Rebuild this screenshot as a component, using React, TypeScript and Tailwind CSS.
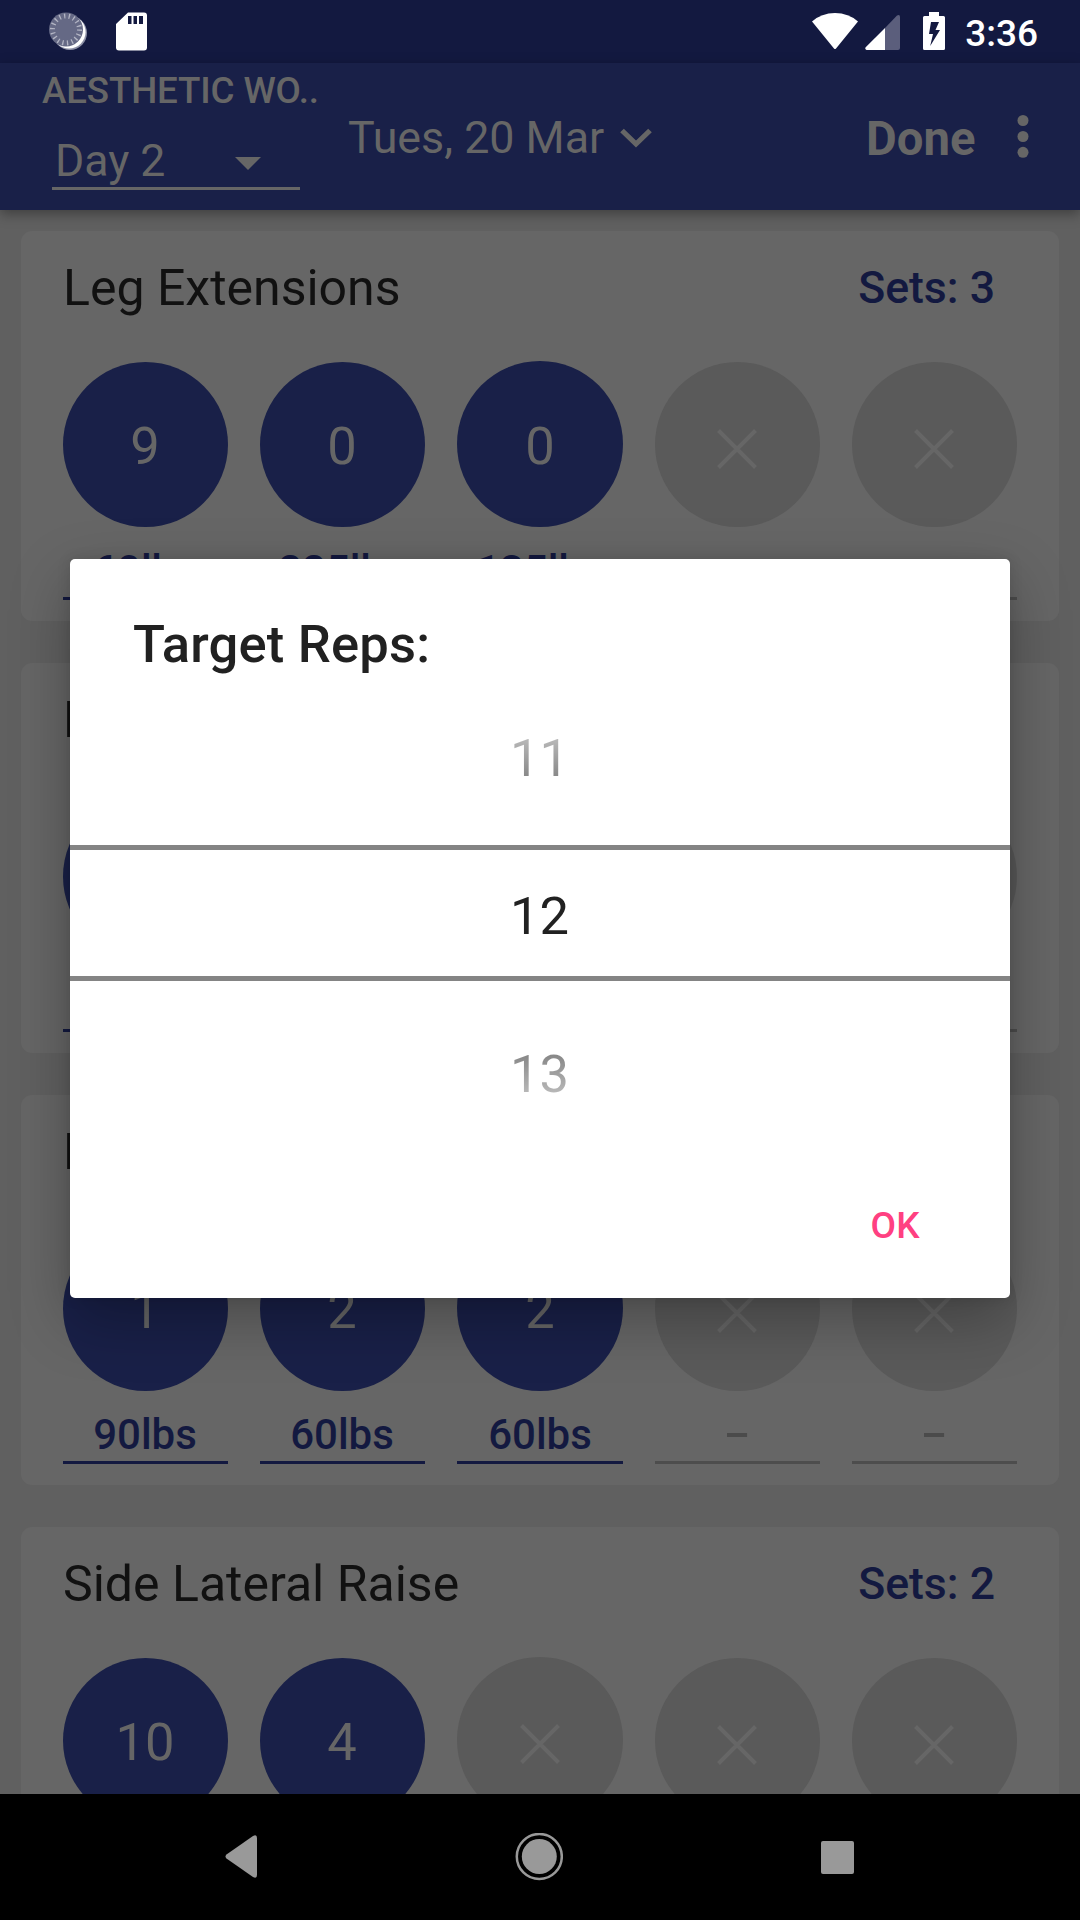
import React from "react";

type SetItem = { reps?: string; weight?: string };
type Exercise = { name: string; sets: string; items: SetItem[] };

const exercises: Exercise[] = [
  {
    name: "Leg Extensions",
    sets: "Sets: 3",
    items: [{ reps: "9", weight: "60lbs" }, { reps: "0", weight: "225lbs" }, { reps: "0", weight: "135lbs" }, {}, {}],
  },
  {
    name: "Leg Press",
    sets: "Sets: 3",
    items: [{ reps: "8", weight: "90lbs" }, { reps: "8", weight: "90lbs" }, { reps: "8", weight: "90lbs" }, {}, {}],
  },
  {
    name: "Leg Curls",
    sets: "Sets: 3",
    items: [{ reps: "1", weight: "90lbs" }, { reps: "2", weight: "60lbs" }, { reps: "2", weight: "60lbs" }, {}, {}],
  },
  {
    name: "Side Lateral Raise",
    sets: "Sets: 2",
    items: [{ reps: "10", weight: "20lbs" }, { reps: "4", weight: "20lbs" }, {}, {}, {}],
  },
];

function SetCell({ item, wide }: { item: SetItem; wide: boolean }) {
  const active = item.reps !== undefined;
  return (
    <div className={wide ? "w-[166px] -mt-px" : "w-[165px] pr-0"}>
      <div
        className={
          "flex items-center justify-center rounded-full " +
          (wide ? "h-[166px] " : "h-[165px] pr-px ") +
          (active ? "bg-[#192048]" : "bg-[#5a5a5a]")
        }
      >
        {active ? (
          <span className="pt-[4px] text-[52.5px] leading-none text-[#666]">{item.reps}</span>
        ) : (
          <svg className="mt-[8px]" width="40" height="40" viewBox="0 0 40 40" fill="none" stroke="#666" strokeWidth="4">
            <path d="M1.500 1.500L38.500 38.500M38.500 1.500L1.500 38.500" />
          </svg>
        )}
      </div>
      <div
        className={
          "h-[70px] pt-[17px] text-center text-[42px] font-medium leading-[53px] " +
          (wide ? "" : "pr-px ") +
          (active ? "text-[#131940]" : "text-[#4b4b4b]")
        }
      >
        {active ? item.weight : <span className="inline-block -translate-y-px scale-x-[1.85]">-</span>}
      </div>
      <div className={"h-[3px] " + (active ? "bg-[#131940]" : "bg-[#4d4d4d]")} />
    </div>
  );
}

function ExerciseCard({ exercise }: { exercise: Exercise }) {
  return (
    <section className="h-[390px] shrink-0 rounded-[11px] bg-[#666] px-[42px]">
      <div className="flex h-[114px] items-center justify-between pr-[22px]">
        <h2 className="text-[50px] text-[#111]">{exercise.name}</h2>
        <span className="text-[44.6px] font-medium text-[#131940]">{exercise.sets}</span>
      </div>
      <div className="mt-[17px] flex gap-8">
        {exercise.items.map((item, i) => (
          <SetCell key={i} item={item} wide={i === 2} />
        ))}
      </div>
    </section>
  );
}

function StatusBar() {
  return (
    <div className="flex h-[63px] shrink-0 items-center bg-[#131940]">
      <svg className="ml-[48px]" width="40" height="63" viewBox="0 0 40 63">
        <circle cx="22" cy="33" r="17" fill="#8d90a6" />
        <circle cx="21" cy="32" r="16.600" fill="#fff" />
        <circle cx="18" cy="29.500" r="17" fill="#656985" />
        <circle cx="18" cy="29.500" r="13.500" fill="none" stroke="#b3b5c4" strokeWidth="5" strokeDasharray="1.300 3.410" />
      </svg>
      <svg className="ml-[28px]" width="31" height="63" viewBox="0 0 31 63">
        <path
          fillRule="evenodd"
          fill="#fff"
          d="M12 12.500H28Q31 12.500 31 15.500V47.500Q31 50.500 28 50.500H3Q0 50.500 0 47.500V24ZM12 16V24H15.500V16ZM17.500 16V24H21V16ZM23 16V24H27V16Z"
        />
      </svg>
      <svg className="ml-auto" width="46" height="63" viewBox="0 0 46 63">
        <path fill="#fff" d="M0 21.500Q9.500 13 23 13Q36.500 13 46 21.500L24 48.500Q23 49.500 22 48.500Z" />
      </svg>
      <svg className="ml-[7px]" width="35" height="63" viewBox="0 0 35 63">
        <path fill="#5b5e7c" d="M32 15.500Q35 14 35 17V48Q35 50 33 50H20V28Z" />
        <path fill="#fff" d="M20 28V50H1.500Q-.5 49 .7 47.300Z" />
      </svg>
      <svg className="ml-[23px]" width="22" height="63" viewBox="0 0 22 63">
        <path
          fillRule="evenodd"
          fill="#fff"
          d="M6 12H16V16H20.500Q22 16 22 17.500V48.500Q22 50 20.500 50H1.500Q0 50 0 48.500V17.500Q0 16 1.500 16H6ZM8 22L6 34H10L7.200 46L17 30H12.500L16 22Z"
        />
      </svg>
      <span className="ml-[20px] mr-[42px] pt-[4px] text-[37px] font-medium leading-none text-white">3:36</span>
    </div>
  );
}

function AppBar() {
  return (
    <header className="z-10 flex h-[147px] shrink-0 bg-[#192048] text-[#666] shadow-[0_4px_12px_rgba(0,0,0,0.35)]">
      <div className="ml-[42px] w-[306px]">
        <div className="whitespace-nowrap pt-[5px] text-[36.75px] font-medium leading-[46px] tracking-[-0.15px]">AESTHETIC WO..</div>
        <div className="ml-[10px] mt-[15px] flex h-[61px] w-[248px] items-center justify-between border-b-[3px] border-[#666] pl-[3px] pr-[39px]">
          <span className="pt-[6px] text-[44.6px] leading-none">Day 2</span>
          <svg className="mt-[10px]" width="26" height="13" viewBox="0 0 26 13">
            <path fill="#666" d="M0 0H26L13 13Z" />
          </svg>
        </div>
      </div>
      <div className="flex h-[147px] items-center pt-[2px]">
        <span className="pt-px text-[44.8px] leading-none">Tues, 20 Mar</span>
        <svg className="ml-[16px]" width="32" height="20" viewBox="0 0 32 20" fill="none" stroke="#666" strokeWidth="5.200">
          <path d="M2 2.500L16 16L30 2.500" />
        </svg>
      </div>
      <span className="ml-auto mt-[53px] text-[47.25px] font-bold leading-[47px]">Done</span>
      <svg className="ml-[41px] mr-[51.5px] mt-[51px]" width="12" height="44" viewBox="0 0 12 44" fill="#666">
        <circle cx="6" cy="6.500" r="5.500" />
        <circle cx="6" cy="22.500" r="5.500" />
        <circle cx="6" cy="38.300" r="5.500" />
      </svg>
    </header>
  );
}

function RepsDialog() {
  return (
    <div
      role="dialog"
      className="absolute left-[70px] top-[559px] z-20 flex h-[739px] w-[940px] flex-col rounded-[5px] bg-white shadow-[0_22px_60px_rgba(0,0,0,0.28),0_0_14px_rgba(0,0,0,0.12)]"
    >
      <h1 className="ml-[63px] mt-[50px] text-[52.5px] font-medium leading-[70px] tracking-[0.2px] text-[#212121]">Target Reps:</h1>
      <div className="mt-[32px] flex flex-col text-center text-[52.5px] text-[#212121]">
        <div className="flex h-[134px] flex-col pr-px">
          <span className="mt-[10px] bg-gradient-to-b from-[#d0d0d0] to-[#727272] bg-clip-text leading-[74px] text-transparent">11</span>
        </div>
        <div className="h-[136px] border-y-[5px] border-[#848484] pr-px pt-[3px] leading-[126px]">12</div>
        <div className="flex h-[134px] flex-col pr-px">
          <span className="mt-[56px] bg-gradient-to-b from-[#727272] to-[#d0d0d0] bg-clip-text leading-[74px] text-transparent">13</span>
        </div>
      </div>
      <button className="ml-auto mr-[90px] mt-[86px] text-[37px] font-medium leading-[50px] tracking-[0.3px] text-[#ff4081]">OK</button>
    </div>
  );
}

function NavBar() {
  return (
    <nav className="z-10 flex h-[126px] shrink-0 items-center bg-black">
      <svg className="ml-[225px]" width="32" height="44" viewBox="0 0 32 44">
        <path fill="#999" d="M1.500 23.500Q-.5 21.500 1.500 19.500L28 1Q32 -1 32 3V40Q32 44 28 42Z" />
      </svg>
      <svg className="ml-[258px]" width="48" height="48" viewBox="0 0 48 48">
        <circle cx="24.300" cy="23.500" r="22.500" fill="none" stroke="#999" strokeWidth="2.500" />
        <circle cx="24.300" cy="23.500" r="17.500" fill="#999" />
      </svg>
      <div className="ml-[258px] h-[33px] w-[33px] rounded-[2px] bg-[#999]" />
    </nav>
  );
}

export default function App() {
  return (
    <div className="relative flex h-[1920px] w-[1080px] flex-col overflow-hidden bg-[#606060] font-['Roboto',sans-serif]">
      <StatusBar />
      <AppBar />
      <main className="flex min-h-0 flex-1 flex-col gap-[42px] overflow-hidden px-[21px] pt-[21px]">
        {exercises.map((exercise) => (
          <ExerciseCard key={exercise.name} exercise={exercise} />
        ))}
      </main>
      <NavBar />
      <RepsDialog />
    </div>
  );
}
